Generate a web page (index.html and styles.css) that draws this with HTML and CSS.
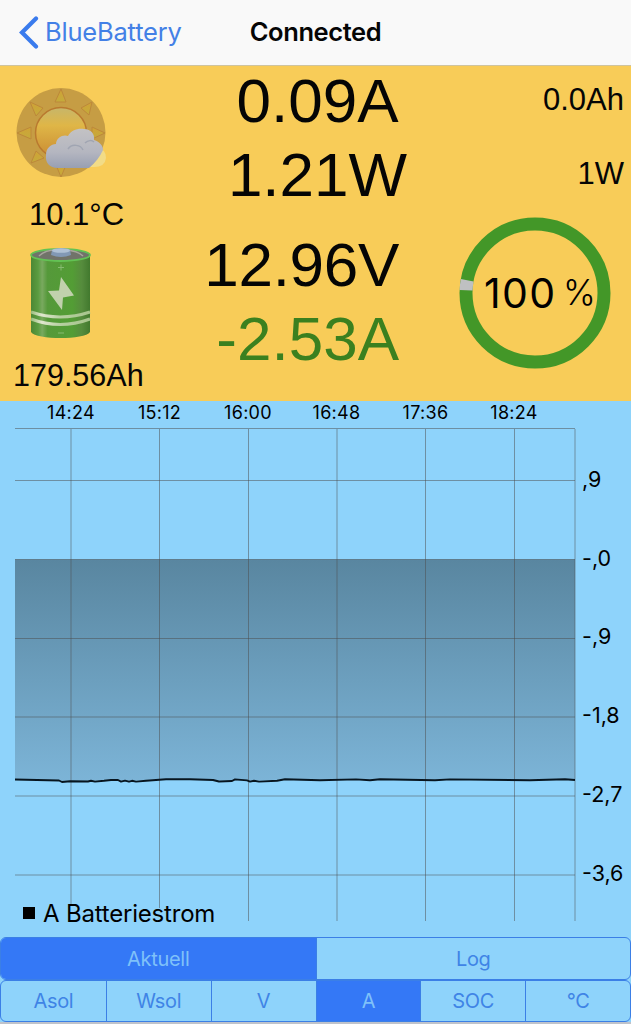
FILE: index.html
```html
<!DOCTYPE html>
<html lang="de">
<head>
<meta charset="UTF-8">
<meta name="viewport" content="width=device-width, initial-scale=1.0">
<title>BlueBattery</title>
<link rel="stylesheet" href="styles.css">
</head>
<body>
  <header class="navbar">
    <a class="back" href="#">
      <svg width="20" height="34" viewBox="0 0 20 34"><path d="M17 2.500 L3 16.500 L17 30.500" fill="none" stroke="#3a7bed" stroke-width="4.2" stroke-linecap="round"/></svg>
      <span>BlueBattery</span>
    </a>
    <h1>Connected</h1>
  </header>

  <section class="panel">
    <div class="status">
      <svg class="weather" width="92" height="94" viewBox="0 0 92 94">
        <defs>
          <linearGradient id="sun" x1="0" y1="0" x2="0" y2="1">
            <stop offset="0" stop-color="#c7b66a"/>
            <stop offset="0.35" stop-color="#dfb647"/>
            <stop offset="1" stop-color="#c98a32"/>
          </linearGradient>
          <linearGradient id="cloud" x1="0" y1="0" x2="0" y2="1">
            <stop offset="0" stop-color="#c3c2c4"/>
            <stop offset="0.6" stop-color="#b4b6c0"/>
            <stop offset="1" stop-color="#989fb2"/>
          </linearGradient>
          <linearGradient id="ray" x1="0" y1="0" x2="0" y2="1">
            <stop offset="0" stop-color="#d0a236"/>
            <stop offset="1" stop-color="#c4ab3c"/>
          </linearGradient>
        </defs>
        <path d="M80 61 Q90 63 90 72 Q89 81 78 81 H70 Z" fill="#f2dc87"/>
        <circle cx="45" cy="46.500" r="44.500" fill="#c69d44"/>
        <g fill="url(#ray)" stroke="#bd883a" stroke-width="1">
          <path d="M45 3 L50 16 H39 Z"/>
          <path d="M76 16 L73 29 L65 22 Z"/>
          <path d="M14 16 L27 22 L20 30 Z"/>
          <path d="M1 47 L15 41 V53 Z"/>
          <path d="M89 47 L76 41 V53 Z"/>
          <path d="M15 77 L20 65 L28 72 Z"/>
          <path d="M45 91 L40 79 H50 Z"/>
        </g>
        <circle cx="45" cy="47" r="25.500" fill="url(#sun)" stroke="#b9792f" stroke-width="1.500"/>
        <path d="M42 82 C33 82 29 76 30 69 C30 62 35 58 40 58 C40 51 48 48 52 50 C55 44 62 42 68 43 C75 43 79 48 78 54 C84 56 87 60 87 64 C84 71 79 77 73 82 Z" fill="url(#cloud)"/>
        <path d="M52 63 C56 57 65 59 67 64 M69 57 C72 54 76 54 78 56" fill="none" stroke="#a0a5b2" stroke-width="1.500"/>
      </svg>
      <p class="temperature">10.1°C</p>
      <svg class="battery" width="66" height="94" viewBox="0 0 66 94">
        <defs>
          <linearGradient id="can">
            <stop offset="0" stop-color="#4c8734"/>
            <stop offset="0.120" stop-color="#5a9c40"/>
            <stop offset="0.190" stop-color="#79a95f"/>
            <stop offset="0.280" stop-color="#55993a"/>
            <stop offset="0.700" stop-color="#539d35"/>
            <stop offset="0.860" stop-color="#568c3d"/>
            <stop offset="1" stop-color="#42792e"/>
          </linearGradient>
          <linearGradient id="bands">
            <stop offset="0" stop-color="#9abd7b"/>
            <stop offset="0.180" stop-color="#e0e7cf"/>
            <stop offset="0.500" stop-color="#b6cfa0"/>
            <stop offset="1" stop-color="#a8c58d"/>
          </linearGradient>
        </defs>
        <path d="M3 10 V86 C8 94 57 94 62 86 V10 Z" fill="url(#can)"/>
        <ellipse cx="32.500" cy="9" rx="29.500" ry="6" fill="#71736a" stroke="#63c254" stroke-width="1.800"/>
        <path d="M11 10 Q17 4 28 4 M38 4 Q50 5 55 10" fill="none" stroke="#a6a59b" stroke-width="1.500"/>
        <path d="M24 4 Q33 0 42 4 L43 9 Q33 13 23 9 Z" fill="#8298b5"/>
        <ellipse cx="33" cy="4.500" rx="9" ry="2.300" fill="#afc0d5"/>
        <path d="M30 21.500 H36 M33 18.500 V24.500 M30 87 H36" stroke="#86ba70" stroke-width="1"/>
        <path d="M33 31 L46 49.500 L35 51.500 L34 64 L20 45 L31 44.500 Z" fill="#c1d1ad"/>
        <path d="M3 66 Q32 76 62 66" fill="none" stroke="url(#bands)" stroke-width="3"/>
        <path d="M3 73 Q32 84 62 73" fill="none" stroke="url(#bands)" stroke-width="3"/>
      </svg>
      <p class="capacity">179.56Ah</p>
    </div>

    <div class="readings">
      <div class="solar">
        <p>0.09A</p>
        <p>1.21W</p>
      </div>
      <div class="load">
        <p class="voltage">12.96V</p>
        <p class="charging">-2.53A</p>
      </div>
    </div>

    <div class="totals">
      <p class="total">0.0Ah</p>
      <p class="total">1W</p>
      <svg class="soc" width="152" height="152" viewBox="0 0 152 152">
        <circle cx="76" cy="76" r="69" fill="none" stroke="#439728" stroke-width="13"/>
        <path d="M7.060 73.200 A69 69 0 0 1 8.200 63.200" fill="none" stroke="#bfc0c2" stroke-width="13"/>
        <text class="soc-value" x="25" y="91">100</text>
        <text class="soc-unit" x="104" y="88">%</text>
      </svg>
    </div>
  </section>

  <svg class="chart" width="631" height="536" viewBox="0 401 631 536">
    <defs>
      <linearGradient id="area" x1="0" y1="0" x2="0" y2="1">
        <stop offset="0" stop-color="#5986a0"/>
        <stop offset="1" stop-color="#7cb4d7"/>
      </linearGradient>
    </defs>
    <path d="M15 559.500 H575 V779.500 L283 779.500 L248 781 L215 780 L170 779 L120 781 L60 781 L15 779.500 Z" fill="url(#area)"/>
    <g class="grid">
      <path d="M15 428.500 H575 M15 480.500 H575 M15 559.500 H575 M15 638.500 H575 M15 717 H575 M15 796 H575 M15 875 H575"/>
      <path d="M71 429 V904 M159.500 429 V908 M248.500 429 V921 M337 429 V921 M425.500 429 V921 M514.500 429 V921 M575 429 V921"/>
    </g>
    <path class="current" d="M15 779.500 L59 780.500 L62 782 L70 781.300 L88 781.500 L91 780.800 L95 781.600 L104 780.800 L111 780 L118 780 L121 781.600 L125 780.600 L129 781.700 L132 780.800 L136 781.600 L146 780.800 L156 780 L166 779.200 L190 779.200 L213 780 L219 781.500 L232 781 L235 779.400 L247 780.400 L250 781.600 L254 780.800 L259 781.600 L277 780.800 L285 779.300 L320 780.300 L356 779.400 L370 780.300 L380 779.300 L435 780.200 L450 779.400 L530 780.200 L565 779.300 L575 780"/>
    <g class="times">
      <text x="71" y="418.500">14:24</text>
      <text x="159.500" y="418.500">15:12</text>
      <text x="248" y="418.500">16:00</text>
      <text x="336.500" y="418.500">16:48</text>
      <text x="425.500" y="418.500">17:36</text>
      <text x="514" y="418.500">18:24</text>
    </g>
    <g class="values">
      <text x="582" y="487">,9</text>
      <text x="582" y="565.500">-,0</text>
      <text x="582" y="644">-,9</text>
      <text x="582" y="723">-1,8</text>
      <text x="582" y="802">-2,7</text>
      <text x="582" y="881">-3,6</text>
    </g>
    <rect x="23" y="907" width="12" height="12"/>
    <text class="legend" x="43" y="922">A Batteriestrom</text>
  </svg>

  <nav class="segments">
    <button class="active">Aktuell</button>
    <button>Log</button>
  </nav>
  <nav class="segments sources">
    <button>Asol</button>
    <button>Wsol</button>
    <button>V</button>
    <button class="active">A</button>
    <button>SOC</button>
    <button>°C</button>
  </nav>
</body>
</html>
```
FILE: styles.css
```css
* {
  box-sizing: border-box;
}

body {
  margin: 0;
  height: 1024px;
  overflow: hidden;
  background: #8ed3fb;
  border-bottom: 2px solid #bfc3cb;
  color: #050505;
  font-family: Inter, sans-serif;
}

p, h1 {
  margin: 0;
}

svg {
  display: block;
}

.navbar {
  display: grid;
  grid-template-columns: 1fr auto 1fr;
  align-items: center;
  height: 66px;
  padding: 0 19px;
  background: #f9f9f9;
  border-bottom: 1px solid #cfc49f;
}

.navbar h1 {
  margin-top: -2px;
  font-size: 25.5px;
  font-weight: 600;
  letter-spacing: -0.4px;
}

.back {
  display: flex;
  align-items: center;
  gap: 6px;
  color: #4380e6;
  font-size: 25.5px;
  letter-spacing: -0.2px;
  text-decoration: none;
}

.back span {
  margin-top: -2px;
}

.panel {
  display: grid;
  grid-template-columns: 190px 1fr 190px;
  height: 335px;
  background: #f8cc58;
  font-family: "Liberation Sans", sans-serif;
  font-size: 31px;
  line-height: 36px;
  font-kerning: none;
}

.status {
  padding: 20px 0 0 13px;
}

.weather {
  margin-left: 3px;
}

.temperature {
  margin: 17px 0 13px 16px;
}

.battery {
  margin-left: 15px;
}

.capacity {
  margin-top: 17px;
  font-size: 30.500px;
}

.readings {
  display: flex;
  flex-direction: column;
  gap: 16px;
  font-size: 62px;
  line-height: 74px;
  margin-top: -2px;
}

.solar {
  padding-left: 4px;
  text-align: center;
}

.load {
  padding-right: 42px;
  text-align: right;
}

.voltage {
  margin-left: -10px;
  letter-spacing: -0.3px;
}

.charging {
  color: #3b801f;
}

.totals {
  display: flex;
  flex-direction: column;
  align-items: flex-end;
  padding: 16px 7px 0 0;
}

.total {
  margin-bottom: 38px;
}

.total + .total {
  margin-bottom: 25px;
}

.soc {
  margin-right: 13px;
  font-family: Inter, sans-serif;
}

.soc-value {
  font-size: 41px;
  letter-spacing: 1.3px;
}

.soc-unit {
  font-size: 35px;
  font-weight: 300;
}

.grid {
  fill: none;
  stroke: #4c4c4c;
  stroke-opacity: 0.5;
  stroke-width: 1;
}

.current {
  fill: none;
  stroke: #07151f;
  stroke-width: 1.9;
  stroke-linejoin: round;
}

.times {
  font-size: 18px;
  letter-spacing: 0.3px;
  text-anchor: middle;
}

.values {
  font-size: 21.500px;
}

.legend {
  font-size: 24px;
  letter-spacing: -0.2px;
}

.segments {
  display: grid;
  grid-template-columns: repeat(2, 1fr);
  height: 43px;
  border: 1.500px solid #3b7fe6;
  border-radius: 6px;
  overflow: hidden;
}

.segments button {
  padding: 0;
  border: 0;
  border-left: 1.500px solid #3b7fe6;
  background: none;
  color: #3f84e6;
  font-family: inherit;
  font-size: 20px;
  font-weight: 400;
  letter-spacing: -0.3px;
}

.segments button:first-child {
  border-left: 0;
}

.segments .active {
  background: #3478f6;
  color: #7fc1f9;
}

.sources {
  grid-template-columns: repeat(6, 1fr);
  height: 42px;
}
```
